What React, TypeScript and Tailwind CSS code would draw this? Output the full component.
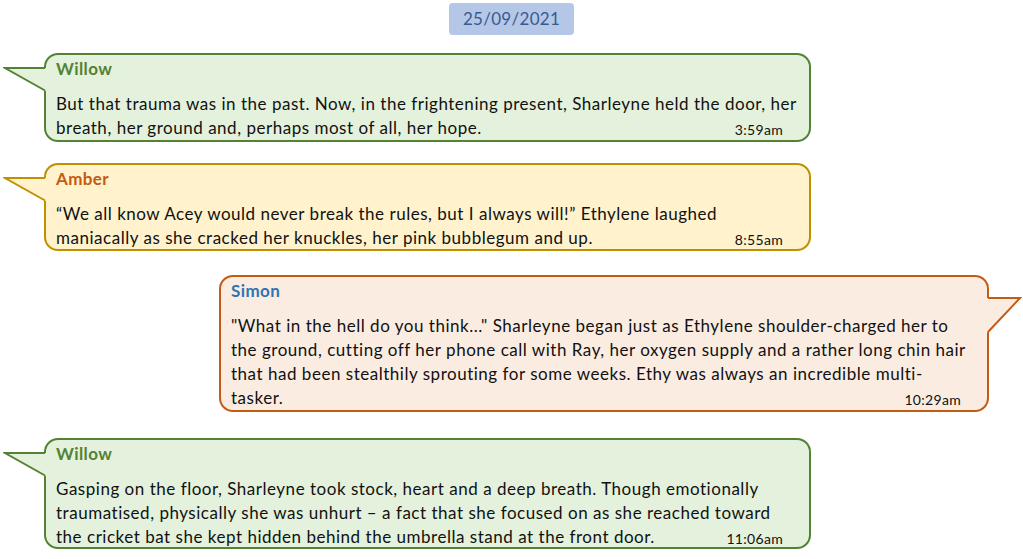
import React from "react";

type Side = "left" | "right";

interface BubbleProps {
  name: string;
  nameColor: string;
  bg: string;
  border: string;
  side: Side;
  lines: string[];
  time: string;
  className: string;
}

const FONT = { fontFamily: "Lato, 'Noto Sans', sans-serif" };

function Tail({ side, bg, border }: { side: Side; bg: string; border: string }) {
  if (side === "left") {
    return (
      <svg
        className="absolute left-[-43px] top-[10px]"
        width="45"
        height="30"
        viewBox="0 0 45 30"
      >
        <polygon points="2,3 45,3 45,27 42,25.5" fill={bg} />
        <polyline
          points="42,3 2,3 42,25.5"
          fill="none"
          stroke={border}
          strokeWidth="2"
          strokeLinejoin="miter"
        />
      </svg>
    );
  }
  return (
    <svg
      className="absolute right-[-43px] top-[18px]"
      width="45"
      height="42"
      viewBox="0 0 45 42"
    >
      <polygon points="0,3 35,3 3,37 0,38" fill={bg} />
      <polyline
        points="3,3 35,3 3,37"
        fill="none"
        stroke={border}
        strokeWidth="2"
        strokeLinejoin="miter"
      />
    </svg>
  );
}

function Bubble({ name, nameColor, bg, border, side, lines, time, className }: BubbleProps) {
  return (
    <div
      className={`relative shrink-0 rounded-[14px] border-2 pl-[10px] pt-[4px] ${className}`}
      style={{ backgroundColor: bg, borderColor: border }}
    >
      <Tail side={side} bg={bg} border={border} />
      <div
        className="h-[20px] text-[17px] font-bold leading-[20px] tracking-[0.4px]"
        style={{ color: nameColor }}
      >
        {name}
      </div>
      <div className="mt-[13px] text-[17px] leading-[24px] tracking-[0.52px] text-[#111111]">
        {lines.map((l, i) => (
          <div key={i} className="flex h-[24px] items-center whitespace-nowrap">
            <span>{l}</span>
            {i === lines.length - 1 && (
              <span className="ml-auto mr-[26px] pt-[3px] text-[14px] tracking-[0.3px]">{time}</span>
            )}
          </div>
        ))}
      </div>
    </div>
  );
}

export default function App() {
  return (
    <div className="flex h-[559px] w-[1023px] flex-col overflow-hidden bg-white" style={FONT}>
      <div className="ml-[449px] mt-[3px] flex h-[32px] w-[125px] items-center justify-center rounded-[4px] bg-[#b4c7e7] text-[17px] tracking-[0.3px] text-[#3a5a8f]">
        25/09/2021
      </div>
      <Bubble
        className="ml-[44px] mt-[18px] h-[89px] w-[767px]"
        name="Willow"
        nameColor="#548235"
        bg="#e4f1dc"
        border="#548235"
        side="left"
        lines={[
          "But that trauma was in the past. Now, in the frightening present, Sharleyne held the door, her",
          "breath, her ground and, perhaps most of all, her hope.",
        ]}
        time="3:59am"
      />
      <Bubble
        className="ml-[44px] mt-[21px] h-[88px] w-[767px]"
        name="Amber"
        nameColor="#c55a11"
        bg="#fff2cc"
        border="#bf9000"
        side="left"
        lines={[
          "\u201CWe all know Acey would never break the rules, but I always will!\u201D Ethylene laughed",
          "maniacally as she cracked her knuckles, her pink bubblegum and up.",
        ]}
        time="8:55am"
      />
      <Bubble
        className="ml-[219px] mt-[24px] h-[137px] w-[770px]"
        name="Simon"
        nameColor="#2e75b6"
        bg="#fbece2"
        border="#c55a11"
        side="right"
        lines={[
          "\"What in the hell do you think...\" Sharleyne began just as Ethylene shoulder-charged her to",
          "the ground, cutting off her phone call with Ray, her oxygen supply and a rather long chin hair",
          "that had been stealthily sprouting for some weeks. Ethy was always an incredible multi-",
          "tasker.",
        ]}
        time="10:29am"
      />
      <Bubble
        className="ml-[44px] mt-[26px] h-[111px] w-[767px]"
        name="Willow"
        nameColor="#548235"
        bg="#e4f1dc"
        border="#548235"
        side="left"
        lines={[
          "Gasping on the floor, Sharleyne took stock, heart and a deep breath. Though emotionally",
          "traumatised, physically she was unhurt \u2013 a fact that she focused on as she reached toward",
          "the cricket bat she kept hidden behind the umbrella stand at the front door.",
        ]}
        time="11:06am"
      />
    </div>
  );
}
